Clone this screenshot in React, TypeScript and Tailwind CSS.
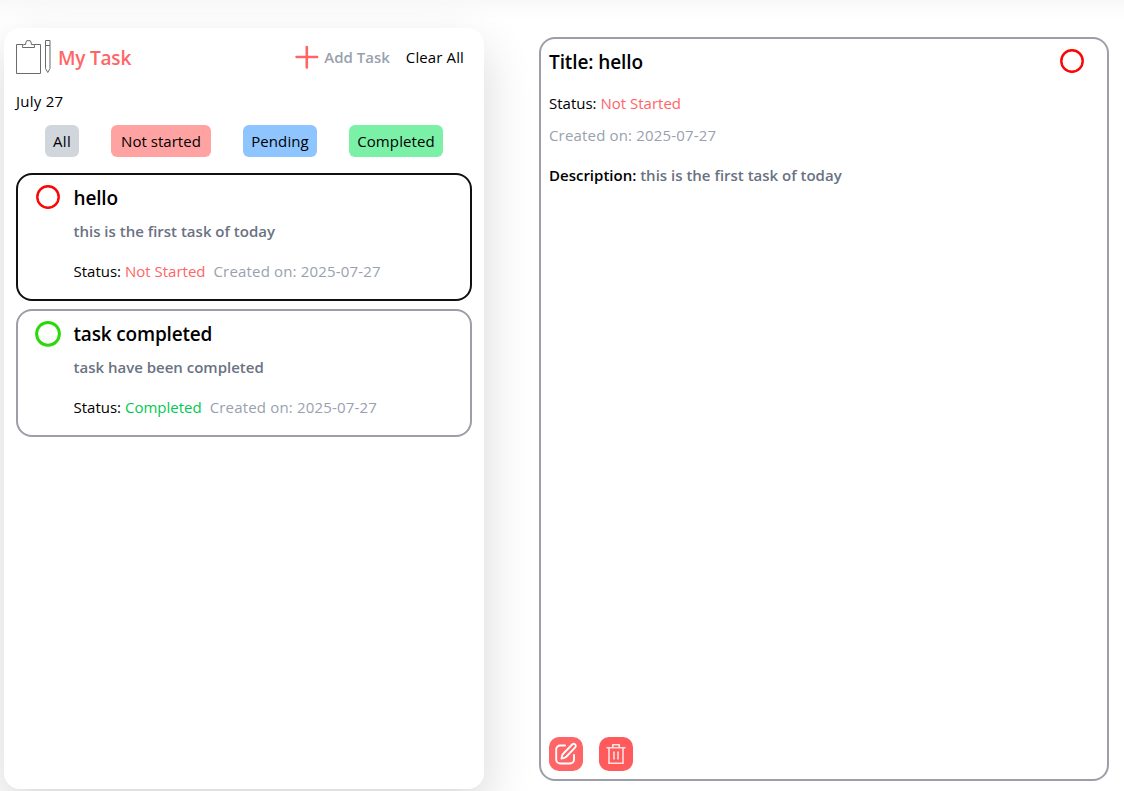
import React from "react";

type Status = "Not Started" | "Pending" | "Completed";

interface Task {
  title: string;
  description: string;
  status: Status;
  created: string;
  selected: boolean;
}

const tasks: Task[] = [
  { title: "hello", description: "this is the first task of today", status: "Not Started", created: "2025-07-27", selected: true },
  { title: "task completed", description: "task have been completed", status: "Completed", created: "2025-07-27", selected: false },
];

const filters = [
  { label: "All", style: "w-[34px] tracking-[0.3px] bg-gray-300" },
  { label: "Not started", style: "w-[100px] tracking-[0.03px] bg-[#ffa2a2]" },
  { label: "Pending", style: "w-[74px] tracking-[0.08px] bg-[#8ec5ff]" },
  { label: "Completed", style: "w-[94px] tracking-[0.1px] bg-[#7bf1a8]" },
];

const statusColor: Record<Status, string> = {
  "Not Started": "text-[#ff6467]",
  Pending: "text-[#51a2ff]",
  Completed: "text-[#00c950]",
};

function ClipboardIcon() {
  return (
    <svg width="36" height="36" viewBox="0 0 36 36" fill="none" stroke="#6b6b6b" strokeWidth="1" className="shrink-0">
      <path d="M7 4.5H.5v29h24v-29H17.500" />
      <path d="M6.500 7.500v-2l1.500-1h1.700v-1.500l1-2.300h3.600l1 2.300v1.500H17l1.500 1v2z" fill="#fff" />
      <path d="M29.500.5h4.500v28l-2.250 4-2.250-4zM29.500 5.500h4.500" />
    </svg>
  );
}

function StatusRing({ status }: { status: Status }) {
  const done = status === "Completed";
  return (
    <svg width="28" height="28" viewBox="0 0 28 28" fill="none" className="shrink-0">
      <circle cx="14" cy={done ? 14.8 : 14} r={done ? 11.4 : 10.7} stroke={done ? "#2bd90b" : "#fb0505"} strokeWidth={done ? 3 : 2.4} />
    </svg>
  );
}

function TaskCard({ task }: { task: Task }) {
  return (
    <div className={"flex h-32 rounded-2xl border-2 pl-4 pt-2 " + (task.selected ? "border-[#101014]" : "border-[#9c9fa7]")}>
      <StatusRing status={task.status} />
      <div className="ml-[11.5px]">
        <h2 className="mt-[1px] text-[19px] leading-7 font-semibold tracking-[-0.17px]">{task.title}</h2>
        <p className="mt-[7px] text-[15px] leading-6 font-semibold text-gray-500">{task.description}</p>
        <div className="mt-4 flex gap-2 text-[15px] leading-6">
          <p>Status: <span className={statusColor[task.status]}>{task.status}</span></p>
          <p className="tracking-[0.17px] text-gray-400">Created on: {task.created}</p>
        </div>
      </div>
    </div>
  );
}

function EditIcon() {
  return (
    <svg width="24" height="24" viewBox="0 0 24 24" fill="none" stroke="#fff" strokeWidth="1.900" strokeLinecap="round" strokeLinejoin="round">
      <path d="M11 3.500H6.200a4 4 0 0 0-4 4V17.500a4 4 0 0 0 4 4H16a4 4 0 0 0 4-4V13" />
      <path d="M18.200 2.500a2 2 0 0 1 3 2.800L12.500 14.500c-1.300 1.300-3 1.800-5 2 .1-2 .5-3.700 1.900-5z" />
    </svg>
  );
}

function TrashIcon() {
  return (
    <svg width="20" height="22" viewBox="0 0 20 22" fill="none" stroke="#ffe0e0" strokeWidth="1.600">
      <path d="M.5 4.800h19M6.800 4.500V1.800h6.400v2.700M3 5v15.200h14V5M8 8.500v8M12 8.500v8" />
    </svg>
  );
}

export default function App() {
  const current = tasks[0];
  return (
    <div className="relative h-[791px] w-[1124px] overflow-hidden bg-white font-['Open_Sans','Noto_Sans',sans-serif] text-black">
      <div className="absolute inset-x-0 top-0 h-5 bg-gradient-to-b from-[#f8f8f8] via-[#fcfcfc] to-white" />
      <div className="relative flex h-full pt-7 pl-1">
        <main className="h-[761px] w-[480px] shrink-0 rounded-2xl bg-white px-3 pt-3 shadow-[0_20px_50px_rgba(8,8,8,0.16)]">
          <header className="flex h-9 items-center">
            <ClipboardIcon />
            <h1 className="ml-1.5 text-[19px] font-semibold tracking-[-0.2px] text-[#ff6467]">My Task</h1>
            <button className="ml-auto flex items-center gap-1 pb-0.5 text-[15px] font-semibold text-gray-400">
              <svg width="26" height="24" viewBox="0 0 26 24" fill="none" stroke="#ff6467" strokeWidth="2.600" strokeLinecap="round">
                <path d="M2.600 12h20.500M12.800 2v20.500" />
              </svg>
              Add Task
            </button>
            <button className="mr-2 ml-4 pb-0.5 text-[15px] tracking-[0.12px]">Clear All</button>
          </header>
          <p className="mt-[13px] text-[15px] leading-6 tracking-[0.25px]">July 27</p>
          <nav className="mt-3 flex justify-center gap-8">
            {filters.map((f) => (
              <button key={f.label} className={"h-8 rounded-md text-center text-[15px] whitespace-nowrap " + f.style}>{f.label}</button>
            ))}
          </nav>
          <section className="mt-4 flex flex-col gap-2">
            {tasks.map((t) => <TaskCard key={t.title} task={t} />)}
          </section>
        </main>
        <aside className="mt-[9px] ml-[55px] flex h-[744px] w-[570px] flex-col rounded-2xl border-2 border-[#9c9fa7] p-2">
          <div className="flex h-7 items-center justify-between pr-[13px]">
            <h2 className="mt-[2px] text-[19px] leading-7 font-semibold tracking-[-0.1px]">Title: {current.title}</h2>
            <StatusRing status={current.status} />
          </div>
          <p className="mt-4 text-[15px] leading-6">Status: <span className="text-[#ff6467]">{current.status}</span></p>
          <p className="mt-2 text-[15px] leading-6 tracking-[0.17px] text-gray-400">Created on: {current.created}</p>
          <p className="mt-4 text-[15px] leading-6 font-semibold">Description: <span className="text-gray-500">{current.description}</span></p>
          <div className="mt-auto flex gap-4">
            <button aria-label="Edit" className="flex size-[34px] items-center justify-center rounded-[10px] bg-[#ff6467]"><EditIcon /></button>
            <button aria-label="Delete" className="flex size-[34px] items-center justify-center rounded-[10px] bg-[#ff5a5c]"><TrashIcon /></button>
          </div>
        </aside>
      </div>
    </div>
  );
}
